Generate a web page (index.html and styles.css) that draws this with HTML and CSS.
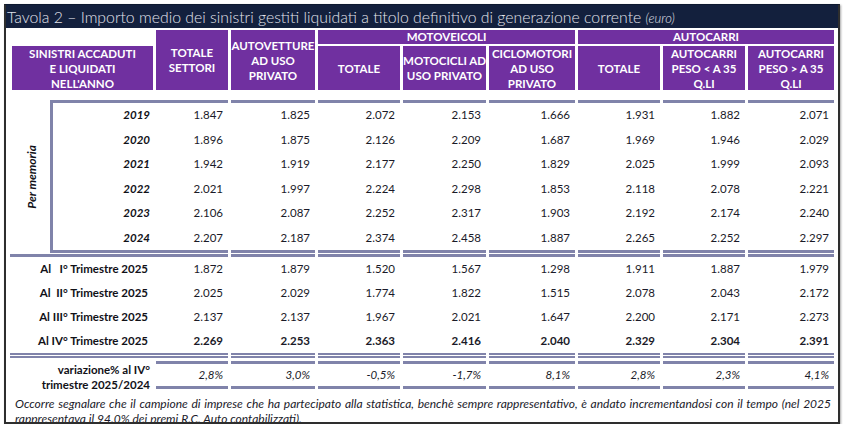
FILE: index.html
```html
<!DOCTYPE html>
<html lang="it">
<head>
<meta charset="utf-8">
<title>Tavola 2</title>
<link rel="stylesheet" href="styles.css">
</head>
<body>
<div class="frame">
  <div class="title">Tavola 2 – Importo medio dei sinistri gestiti liquidati a titolo definitivo di generazione corrente <em>(euro)</em></div>
  <div class="content">
    <div class="head">
      <div class="h h-label">SINISTRI ACCADUTI<br>E LIQUIDATI<br>NELL'ANNO</div>
      <div class="h tall c1">TOTALE<br>SETTORI</div>
      <div class="h tall c2">AUTOVETTURE<br>AD USO<br>PRIVATO</div>
      <div class="h grp-moto">MOTOVEICOLI</div>
      <div class="h grp-auto">AUTOCARRI</div>
      <div class="h sub c3">TOTALE</div>
      <div class="h sub c4">MOTOCICLI AD<br>USO PRIVATO</div>
      <div class="h sub c5">CICLOMOTORI<br>AD USO<br>PRIVATO</div>
      <div class="h sub c6">TOTALE</div>
      <div class="h sub c7">AUTOCARRI<br>PESO &lt; A 35<br>Q.LI</div>
      <div class="h sub c8">AUTOCARRI<br>PESO &gt; A 35<br>Q.LI</div>
    </div>

    <div class="years">
      <div class="memo"><span>Per memoria</span></div>
      <div class="ygrid">
        <div class="row"><div class="lbl">2019</div><div class="v">1.847</div><div class="v">1.825</div><div class="v">2.072</div><div class="v">2.153</div><div class="v">1.666</div><div class="v">1.931</div><div class="v">1.882</div><div class="v">2.071</div></div>
        <div class="row"><div class="lbl">2020</div><div class="v">1.896</div><div class="v">1.875</div><div class="v">2.126</div><div class="v">2.209</div><div class="v">1.687</div><div class="v">1.969</div><div class="v">1.946</div><div class="v">2.029</div></div>
        <div class="row"><div class="lbl">2021</div><div class="v">1.942</div><div class="v">1.919</div><div class="v">2.177</div><div class="v">2.250</div><div class="v">1.829</div><div class="v">2.025</div><div class="v">1.999</div><div class="v">2.093</div></div>
        <div class="row"><div class="lbl">2022</div><div class="v">2.021</div><div class="v">1.997</div><div class="v">2.224</div><div class="v">2.298</div><div class="v">1.853</div><div class="v">2.118</div><div class="v">2.078</div><div class="v">2.221</div></div>
        <div class="row"><div class="lbl">2023</div><div class="v">2.106</div><div class="v">2.087</div><div class="v">2.252</div><div class="v">2.317</div><div class="v">1.903</div><div class="v">2.192</div><div class="v">2.174</div><div class="v">2.240</div></div>
        <div class="row"><div class="lbl">2024</div><div class="v">2.207</div><div class="v">2.187</div><div class="v">2.374</div><div class="v">2.458</div><div class="v">1.887</div><div class="v">2.265</div><div class="v">2.252</div><div class="v">2.297</div></div>
      </div>
    </div>

    <div class="quarters">
      <div class="row"><div class="lbl">Al   I° Trimestre 2025</div><div class="v">1.872</div><div class="v">1.879</div><div class="v">1.520</div><div class="v">1.567</div><div class="v">1.298</div><div class="v">1.911</div><div class="v">1.887</div><div class="v">1.979</div></div>
      <div class="row"><div class="lbl">Al  II° Trimestre 2025</div><div class="v">2.025</div><div class="v">2.029</div><div class="v">1.774</div><div class="v">1.822</div><div class="v">1.515</div><div class="v">2.078</div><div class="v">2.043</div><div class="v">2.172</div></div>
      <div class="row"><div class="lbl">Al III° Trimestre 2025</div><div class="v">2.137</div><div class="v">2.137</div><div class="v">1.967</div><div class="v">2.021</div><div class="v">1.647</div><div class="v">2.200</div><div class="v">2.171</div><div class="v">2.273</div></div>
      <div class="row"><div class="lbl">Al IV° Trimestre 2025</div><div class="v">2.269</div><div class="v">2.253</div><div class="v">2.363</div><div class="v">2.416</div><div class="v">2.040</div><div class="v">2.329</div><div class="v">2.304</div><div class="v">2.391</div></div>
    </div>

    <div class="var">
      <div class="lbl">variazione% al IV°<br>trimestre 2025/2024</div>
      <div class="v">2,8%</div><div class="v">3,0%</div><div class="v">-0,5%</div><div class="v">-1,7%</div><div class="v">8,1%</div><div class="v">2,8%</div><div class="v">2,3%</div><div class="v">4,1%</div>
    </div>

    <div class="note">
      <div class="l1">Occorre segnalare che il campione di imprese che ha partecipato alla statistica, benchè sempre rappresentativo, è andato incrementandosi con il tempo  (nel 2025</div>
      <div class="l2">rappresentava il 94.0% dei premi R.C. Auto contabilizzati).</div>
    </div>
  </div>
</div>
</body>
</html>
```

FILE: styles.css
```css
* { box-sizing: border-box; }

:root {
  --cols: 72px 84px 82px 83px 86px 82px 82px 86px;
  --line: #8083aa;
  --purple: #7030a0;
  --ink: #1a1a28;
}

body {
  margin: 0;
  background: #ffffff;
  font-family: Lato, "Liberation Sans", sans-serif;
  color: var(--ink);
}

.frame {
  width: 836px;
  height: 420px;
  margin: 4px 0 0 4px;
  border: 2px solid #2e2e2e;
  border-top: 1px solid #0d1930;
  overflow: hidden;
  box-shadow: 1px 1px 2px rgba(0, 0, 0, 0.35);
}

.title {
  height: 23px;
  background: #13203d;
  color: #e2e3ec;
  font-family: Lato, "Liberation Sans", sans-serif;
  font-weight: 300;
  font-size: 15.8px;
  line-height: 23px;
  padding-left: 1px;
  white-space: nowrap;
}

.title em {
  font-size: 13px;
}

.content {
  padding: 2px 2px 0 6px;
}

/* header */
.head {
  display: grid;
  grid-template-columns: 141px var(--cols);
  grid-template-rows: 14px 44px;
  gap: 2px 3px;
}

.h {
  background: var(--purple);
  color: #ffffff;
  font-weight: 700;
  font-size: 11.5px;
  line-height: 15px;
  text-align: center;
  display: flex;
  align-items: center;
  justify-content: center;
}

.h-label { grid-column: 1; grid-row: 2; }
.tall { grid-row: 1 / 3; }
.sub { grid-row: 2; }
.grp-moto { grid-column: 4 / 7; grid-row: 1; line-height: 14px; }
.grp-auto { grid-column: 7 / 10; grid-row: 1; line-height: 14px; }
.c1 { grid-column: 2; }
.c2 { grid-column: 3; }
.c3 { grid-column: 4; }
.c4 { grid-column: 5; }
.c5 { grid-column: 6; }
.c6 { grid-column: 7; }
.c7 { grid-column: 8; }
.c8 { grid-column: 9; }

.row { display: contents; }

.v {
  text-align: right;
  padding-right: 5px;
  font-size: 11.5px;
}

.lbl {
  text-align: right;
  font-weight: 700;
  font-size: 11.5px;
  color: #111118;
}

/* years block */
.years {
  display: flex;
  margin-top: 10px;
}

.memo {
  width: 38px;
  display: flex;
  align-items: center;
  justify-content: center;
}

.memo span {
  writing-mode: vertical-rl;
  transform: rotate(180deg);
  font-weight: 700;
  font-style: italic;
  font-size: 12px;
  color: #111118;
}

.ygrid {
  display: grid;
  grid-template-columns: 103px var(--cols);
  column-gap: 3px;
}

.ygrid .row > div { line-height: 24.5px; }
.ygrid .row:first-child > div { border-top: 3px solid var(--line); }
.ygrid .row:last-child > div { border-bottom: 3px solid var(--line); }

.ygrid .lbl {
  font-style: italic;
  border-left: 3px solid var(--line);
  margin-right: -3px;
  padding-right: 6px;
}

/* quarters block */
.quarters {
  display: grid;
  grid-template-columns: 143px var(--cols);
  column-gap: 3px;
  margin: 1px 0 0 -2px;
}

.quarters .row > div { line-height: 24px; }
.quarters .row:first-child > div { border-top: 3px solid var(--line); }
.quarters .row:last-child > div {
  border-bottom: 5px double var(--line);
  font-weight: 700;
}

.quarters .lbl {
  margin-right: -3px;
  padding-right: 8px;
  white-space: pre;
}

/* variation row */
.var {
  display: grid;
  grid-template-columns: 143px var(--cols);
  column-gap: 3px;
  margin: 3px 0 0 -2px;
  align-items: start;
}

.var .v {
  font-style: italic;
  line-height: 22px;
  border-top: 3px solid var(--line);
  border-bottom: 3px solid var(--line);
}

.var .lbl {
  line-height: 15px;
  padding-right: 3px;
  margin: 1px 0 -4px;
}

/* footnote */
.note {
  margin-top: 8px;
  padding: 0 5px 0 3px;
  font-style: italic;
  font-size: 12px;
  line-height: 14.5px;
  color: #1a1a2a;
}

.note .l1 {
  text-align: justify;
  text-align-last: justify;
  white-space: nowrap;
}
```
